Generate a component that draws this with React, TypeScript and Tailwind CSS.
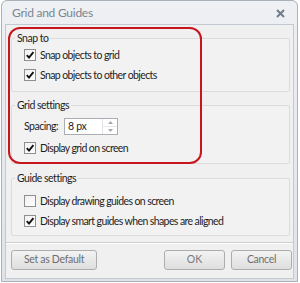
import React from "react";

const font = { fontFamily: "Lato, 'Liberation Sans', sans-serif" };

function Check({ checked }: { checked?: boolean }) {
  return (
    <span className="w-[12px] h-[12px] shrink-0 border border-[#8e8f8f] bg-gradient-to-br from-[#f0f0f0] to-white flex items-center justify-center">
      {checked && (
        <svg width="10" height="10" viewBox="0 0 10 10">
          <path d="M1.8 5.2 L4 7.6 L8.4 2.2" fill="none" stroke="#111" strokeWidth="1.9" />
        </svg>
      )}
    </span>
  );
}

function Row({ label, checked, className = "" }: { label: string; checked?: boolean; className?: string }) {
  return (
    <div className={"h-[18px] flex items-center gap-[4px] pl-[12px] " + className}>
      <Check checked={checked} />
      <span className="text-[10.5px] tracking-[-0.6px] text-[#1e1e1e] leading-none">{label}</span>
    </div>
  );
}

function Legend({ children }: { children: React.ReactNode }) {
  return (
    <div className="-mt-[8px] ml-[3px] h-[14px] w-fit px-[2px] bg-[#f0f0f0] text-[10.5px] tracking-[-0.5px] leading-[14px] text-[#1e1e1e]">
      {children}
    </div>
  );
}

export default function App() {
  return (
    <div className="w-[300px] h-[283px] bg-white relative overflow-hidden pl-[1px]" style={font}>
      <div className="w-[297px] h-[282px] border border-[#a9b1ba] rounded-t-[6px] bg-gradient-to-b from-[#eef0f3] to-[#dfe3e8] flex flex-col">
        <div className="h-[23px] flex items-center justify-between pl-[10px] pr-[12px] pt-[1px] shrink-0">
          <span className="text-[12px] tracking-[-0.25px] text-[#7b8591]">Grid and Guides</span>
          <svg width="9" height="9" viewBox="0 0 9 9">
            <path d="M1 1 L8 8 M8 1 L1 8" stroke="#6f7c8a" strokeWidth="2" />
          </svg>
        </div>
        <div className="flex-1 mx-[3px] mb-[2px] border border-[#c3c9d0] bg-[#f0f0f0] flex flex-col">
          <div className="ml-[5px] mt-[13px] w-[279px] border border-[#dcdcdc] rounded-[2px] bg-[#f2f2f2] pb-[7px]">
            <Legend>Snap to</Legend>
            <Row label="Snap objects to grid" checked className="mt-[1px]" />
            <Row label="Snap objects to other objects" checked className="mt-[2px]" />
          </div>
          <div className="ml-[5px] mt-[13px] w-[279px] border border-[#dcdcdc] rounded-[2px] bg-[#f2f2f2] pb-[6px]">
            <Legend>Grid settings</Legend>
            <div className="mt-[6px] h-[17px] flex items-center pl-[12px]">
              <span className="w-[40px] text-[10.5px] tracking-[-0.5px] text-[#1e1e1e]">Spacing:</span>
              <div className="w-[54px] h-[17px] border border-[#abadb3] bg-white flex">
                <span className="flex-1 text-[10.5px] tracking-[-0.3px] leading-[15px] pl-[3px] text-[#1e1e1e]">8 px</span>
                <div className="w-[15px] border-l border-[#e2e3ea] flex flex-col">
                  <div className="flex-1 flex items-center justify-center border-b border-[#e8e8ec]">
                    <svg width="5" height="3" viewBox="0 0 5 3"><path d="M0 3 L2.5 0 L5 3Z" fill="#a9a9a9" /></svg>
                  </div>
                  <div className="flex-1 flex items-center justify-center">
                    <svg width="5" height="3" viewBox="0 0 5 3"><path d="M0 0 L2.5 3 L5 0Z" fill="#a9a9a9" /></svg>
                  </div>
                </div>
              </div>
            </div>
            <Row label="Display grid on screen" checked className="mt-[4px]" />
          </div>
          <div className="ml-[5px] mt-[14px] w-[279px] border border-[#dcdcdc] rounded-[2px] bg-[#f2f2f2] pb-[5px]">
            <Legend>Guide settings</Legend>
            <Row label="Display drawing guides on screen" className="mt-[7px]" />
            <Row label="Display smart guides when shapes are aligned" checked className="mt-[2px]" />
          </div>
          <div className="mt-[6px] border-t border-[#cfcfcf] border-b border-b-white" />
          <div className="mt-[6px] flex items-center pl-[5px] pr-[1px]">
            <button className="w-[86px] h-[20px] border border-[#adadad] rounded-[3px] bg-gradient-to-b from-[#f3f3f3] to-[#dedede] text-[10.5px] tracking-[-0.3px] text-[#6e6e6e]">
              Set as Default
            </button>
            <div className="flex-1" />
            <button className="w-[61px] h-[20px] border border-[#adadad] rounded-[3px] bg-gradient-to-b from-[#f3f3f3] to-[#dedede] text-[10.5px] text-[#7a7a7a]">
              OK
            </button>
            <button className="ml-[6px] w-[61px] h-[20px] border border-[#adadad] rounded-[3px] bg-gradient-to-b from-[#f3f3f3] to-[#dedede] text-[10.5px] tracking-[-0.3px] text-[#6e6e6e]">
              Cancel
            </button>
          </div>
        </div>
      </div>
      <div className="absolute left-[8px] top-[27px] w-[194px] h-[137px] border-2 border-[#c8161e] rounded-[12px] pointer-events-none" />
    </div>
  );
}
